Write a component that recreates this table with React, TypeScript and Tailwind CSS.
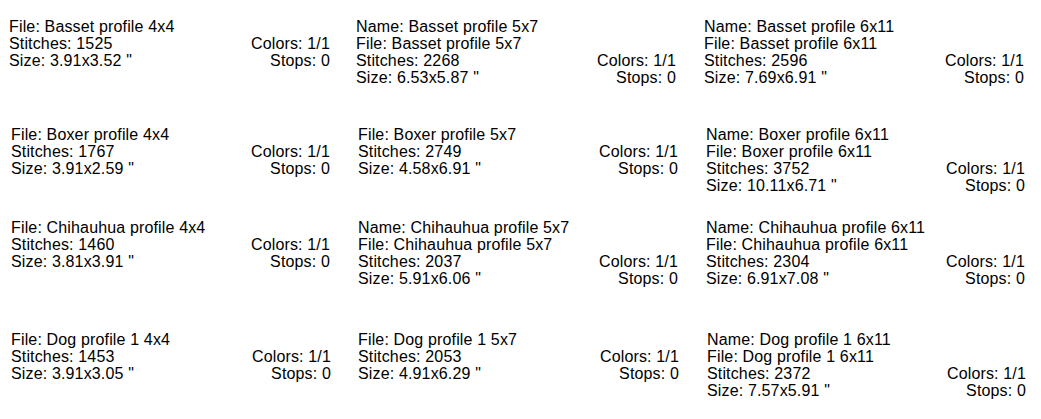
import React from "react";

type Cell = { name?: string; file: string; stitches: string; size: string };

const rows: { top: string; cells: Cell[]; lefts: string[] }[] = [
  {
    top: "mt-[18px]",
    lefts: ["ml-[9px] w-[321px]", "ml-[26px] w-[320px]", "ml-[28px] w-[320px]"],
    cells: [
      { file: "Basset profile 4x4", stitches: "1525", size: "3.91x3.52" },
      { name: "Basset profile 5x7", file: "Basset profile 5x7", stitches: "2268", size: "6.53x5.87" },
      { name: "Basset profile 6x11", file: "Basset profile 6x11", stitches: "2596", size: "7.69x6.91" },
    ],
  },
  {
    top: "mt-[40px]",
    lefts: ["ml-[11px] w-[319px]", "ml-[28px] w-[320px]", "ml-[28px] w-[319px]"],
    cells: [
      { file: "Boxer profile 4x4", stitches: "1767", size: "3.91x2.59" },
      { file: "Boxer profile 5x7", stitches: "2749", size: "4.58x6.91" },
      { name: "Boxer profile 6x11", file: "Boxer profile 6x11", stitches: "3752", size: "10.11x6.71" },
    ],
  },
  {
    top: "mt-[25px]",
    lefts: ["ml-[11px] w-[319px]", "ml-[28px] w-[320px]", "ml-[28px] w-[319px]"],
    cells: [
      { file: "Chihauhua profile 4x4", stitches: "1460", size: "3.81x3.91" },
      { name: "Chihauhua profile 5x7", file: "Chihauhua profile 5x7", stitches: "2037", size: "5.91x6.06" },
      { name: "Chihauhua profile 6x11", file: "Chihauhua profile 6x11", stitches: "2304", size: "6.91x7.08" },
    ],
  },
  {
    top: "mt-[44px]",
    lefts: ["ml-[11px] w-[320px]", "ml-[27px] w-[321px]", "ml-[28px] w-[319px]"],
    cells: [
      { file: "Dog profile 1 4x4", stitches: "1453", size: "3.91x3.05" },
      { file: "Dog profile 1 5x7", stitches: "2053", size: "4.91x6.29" },
      { name: "Dog profile 1 6x11", file: "Dog profile 1 6x11", stitches: "2372", size: "7.57x5.91" },
    ],
  },
];

function CellView({ c, cls }: { c: Cell; cls: string }) {
  return (
    <div className={`${cls} flex shrink-0 items-end justify-between`}>
      <div className="whitespace-pre">
        {c.name && <div>Name: {c.name}</div>}
        <div>File: {c.file}</div>
        <div>Stitches: {c.stitches}</div>
        <div>Size: {c.size} "</div>
      </div>
      <div className="text-right whitespace-pre">
        <div>Colors: 1/1</div>
        <div>Stops: 0</div>
      </div>
    </div>
  );
}

export default function App() {
  return (
    <div className="w-[1041px] h-[419px] overflow-hidden bg-white text-black font-['Liberation_Sans',Arial,sans-serif] text-[16px] leading-[17px] tracking-[0.15px] flow-root">
      {rows.map((r, i) => (
        <div key={i} className={`${r.top} flex items-start`}>
          {r.cells.map((c, j) => (
            <CellView key={j} c={c} cls={r.lefts[j]} />
          ))}
        </div>
      ))}
    </div>
  );
}
